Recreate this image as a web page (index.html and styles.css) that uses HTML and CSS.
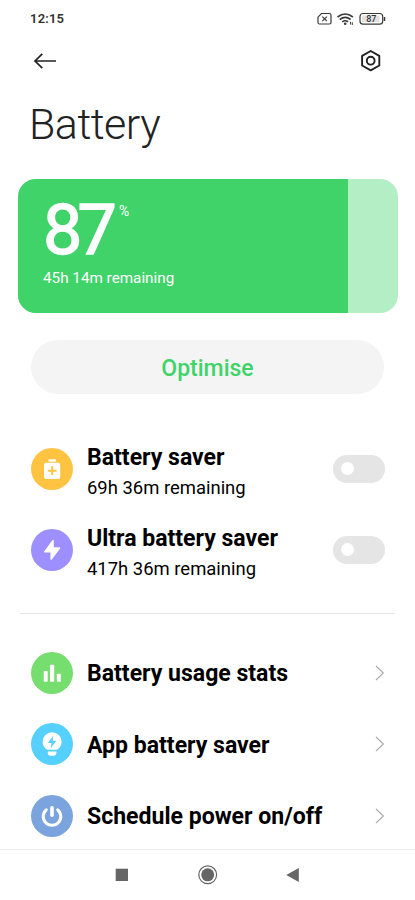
FILE: index.html
```html
<!DOCTYPE html>
<html lang="en">
<head>
<meta charset="utf-8">
<meta name="viewport" content="width=device-width, initial-scale=1">
<title>Battery</title>
<link rel="stylesheet" href="styles.css">
</head>
<body>
<div class="screen">
  <header class="status">
    <span class="time">12:15</span>
    <svg class="status-icons" width="72" height="16" viewBox="0 0 72 16" fill="none" stroke="#3a3a3a" stroke-width="1.2">
      <path d="M4.500 2.500H12.500Q14 2.500 14 4V11.500Q14 13 12.500 13H2.500Q1 13 1 11.500V6.200Z"/>
      <path d="M5.300 5.600L9.900 10.200M9.900 5.600L5.300 10.200"/>
      <path d="M20.500 6Q28.200 0 35.900 6M22.800 8.500Q28.200 4.200 33.600 8.500M25.200 10.900Q28.200 8.600 31.200 10.900" stroke-width="1.600"/>
      <circle cx="28.200" cy="12.700" r="1.300" fill="#3a3a3a" stroke="none"/>
      <path d="M33.500 13.500V10.800M35.300 11.300V14" stroke-width="1"/>
      <rect x="43" y="2.500" width="22.700" height="10.700" rx="3"/>
      <rect x="45" y="4.500" width="17.500" height="6.800" rx="1" fill="#e2e2e2" stroke="none"/>
      <path d="M67.500 6V10" stroke-width="1.500"/>
      <text class="charge" x="54.300" y="11.200" text-anchor="middle">87</text>
    </svg>
  </header>
  <nav class="toolbar">
    <svg width="24" height="18" viewBox="0 0 24 18" fill="none" stroke="#222" stroke-width="1.700"><path d="M23 9H2M9.300 1.800L2 9L9.300 16.200"/></svg>
    <svg width="22" height="24" viewBox="0 0 22 24" fill="none" stroke="#222" stroke-width="1.900"><path d="M10.700 2L19.300 6.900V16.500L10.700 21.400L2.100 16.500V6.900Z" stroke-linejoin="round"/><circle cx="10.700" cy="11.700" r="3.900"/></svg>
  </nav>
  <h1 class="title">Battery</h1>
  <section class="card">
    <div class="level">
      <div class="percent"><span class="number">87</span><span class="sign">%</span></div>
      <p class="left">45h 14m remaining</p>
    </div>
  </section>
  <button class="optimise">Optimise</button>
  <section class="modes">
    <div class="mode">
      <svg class="icon" viewBox="0 0 42 42"><circle cx="21" cy="21" r="21" fill="#ffc342"/><rect x="17.500" y="11.300" width="7.500" height="2.400" rx=".8" fill="#fff"/><rect x="13" y="14.700" width="16.200" height="16.300" rx="2" fill="#fff"/><path d="M16.800 22.700H25.600M21.200 18.300V27.100" stroke="#ffc342" stroke-width="1.900"/></svg>
      <div class="text"><h2>Battery saver</h2><p>69h 36m remaining</p></div>
      <span class="switch"></span>
    </div>
    <div class="mode">
      <svg class="icon" viewBox="0 0 42 42"><circle cx="21" cy="21" r="21" fill="#9d8fff"/><path d="M22.100 11.500L13.600 22.800H20.100V30.300L28.600 19H22.100Z" fill="#fff" stroke="#fff" stroke-width="1.300" stroke-linejoin="round"/></svg>
      <div class="text"><h2>Ultra battery saver</h2><p>417h 36m remaining</p></div>
      <span class="switch"></span>
    </div>
  </section>
  <section class="links">
    <div class="link">
      <svg class="icon" viewBox="0 0 42 42"><circle cx="21" cy="21" r="21" fill="#76de6e"/><g fill="#fff"><rect x="12.700" y="19" width="4" height="10.800" rx=".8"/><rect x="19" y="12.800" width="4.200" height="17" rx=".8"/><rect x="25.800" y="21.700" width="4" height="8.100" rx=".8"/></g></svg>
      <h2>Battery usage stats</h2>
      <svg class="chevron" viewBox="0 0 10 16"><path d="M1 1L8.300 8L1 15"/></svg>
    </div>
    <div class="link">
      <svg class="icon" viewBox="0 0 42 42"><circle cx="21" cy="21" r="21" fill="#55d0ff"/><path d="M16.200 26.800Q11.600 23.800 11.600 18.700A9.500 9.500 0 0 1 30.600 18.700Q30.600 23.800 26 26.800ZM16.800 28.600H25.400V30Q25.400 32.800 22.600 32.800H19.600Q16.800 32.800 16.800 30Z" fill="#fff"/><path d="M22.300 12.800L17 20H20.500L19.900 25L25.200 17.800H21.700Z" fill="#55d0ff"/></svg>
      <h2>App battery saver</h2>
      <svg class="chevron" viewBox="0 0 10 16"><path d="M1 1L8.300 8L1 15"/></svg>
    </div>
    <div class="link">
      <svg class="icon" viewBox="0 0 42 42"><circle cx="21" cy="21" r="21" fill="#7ba4de"/><g fill="none" stroke="#fff" stroke-linecap="round"><path d="M15.300 14.800A8.800 8.800 0 1 0 26.700 14.800" stroke-width="3"/><path d="M21 12.700V20.300" stroke-width="3.600"/></g></svg>
      <h2>Schedule power on/off</h2>
      <svg class="chevron" viewBox="0 0 10 16"><path d="M1 1L8.300 8L1 15"/></svg>
    </div>
  </section>
  <footer class="navbar">
    <svg width="20" height="20" viewBox="0 0 20 20" fill="#666"><rect x="3.700" y="3.700" width="12.300" height="12.300"/></svg>
    <svg width="20" height="20" viewBox="0 0 20 20" fill="#666"><circle cx="9.700" cy="9.800" r="6.500"/><circle cx="9.700" cy="9.800" r="8.900" fill="none" stroke="#666" stroke-width="1.200"/></svg>
    <svg width="20" height="20" viewBox="0 0 20 20" fill="#666"><path d="M3.300 9.900L15.800 2.900V16.900Z"/></svg>
  </footer>
</div>
</body>
</html>
```
FILE: styles.css
```css
* { box-sizing: border-box; margin: 0; padding: 0; }
body { background: #fff; color: #000; font-family: Roboto, "Liberation Sans", sans-serif; }
svg { display: block; flex: none; }
.screen { width: 415px; height: 900px; display: flex; flex-direction: column; overflow: hidden; }
.status { height: 37px; padding: 0 26px 0 30px; display: flex; align-items: center; justify-content: space-between; }
.time { font-size: 13px; font-weight: 600; color: #333; letter-spacing: .2px; }
.charge { font-size: 9px; font-weight: 500; fill: #333; stroke: none; }
.toolbar { height: 47px; padding: 0 33px; display: flex; align-items: center; justify-content: space-between; }
.title { height: 95px; padding: 14px 29px 0; font-size: 43px; line-height: 52px; font-weight: 300; letter-spacing: -.5px; color: #222; }
.card { height: 134px; margin: 0 17.500px 0 18px; border-radius: 18px; background: #b3eec5; overflow: hidden; }
.level { width: 87%; height: 100%; padding: 10px 0 0 25px; background: #40d369; color: #fff; }
.percent { display: flex; height: 79px; }
.number { font-size: 70px; line-height: 82px; font-weight: 400; -webkit-text-stroke: 1.400px #fff; letter-spacing: -4.900px; }
.sign { padding-top: 14px; font-size: 14px; line-height: 16px; margin-left: 7.200px; }
.left { font-size: 15.250px; line-height: 20px; }
.optimise { flex: none; height: 54px; margin: 27px 31px 0; border: 0; border-radius: 27px; background: #f4f4f4; color: #40d369; font: 500 23px/28px Roboto, sans-serif; padding: 3px 0 0; }
.modes { height: 220px; margin: 0 20px; padding: 34px 10.500px 0 11px; border-bottom: 1px solid #e6e6e6; }
.mode { display: flex; align-items: center; height: 81px; }
.icon { width: 42px; height: 42px; margin-right: 14px; }
.text { flex: 1; padding-top: 6px; }
h2 { font-size: 23.050px; line-height: 28px; font-weight: 700; white-space: nowrap; }
.text p { font-size: 18.450px; line-height: 24px; margin-top: 4px; white-space: nowrap; }
.switch { width: 52px; height: 28px; padding: 7px 8px; border-radius: 14px; background: #e5e5e5; }
.switch::before { content: ""; display: block; width: 13px; height: 13px; border-radius: 50%; background: #fff; }
.links { height: 235px; padding: 23px 30.500px 0 31px; }
.link { display: flex; align-items: center; height: 71.500px; }
.link h2 { flex: 1; padding-top: 3px; }
.chevron { width: 10px; height: 16px; fill: none; stroke: #aaa; stroke-width: 1.100; }
.navbar { flex: 1; border-top: 1px solid #eee; padding: 0 112px; display: flex; align-items: center; justify-content: space-between; }
```
